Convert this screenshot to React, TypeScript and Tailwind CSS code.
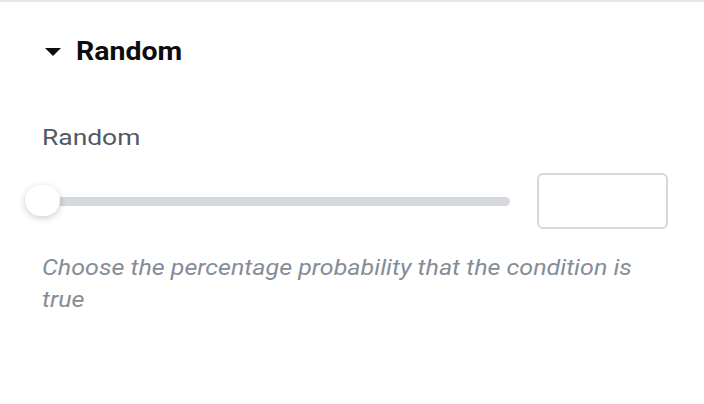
import React from 'react';

export default function App() {
  return (
    <div className="w-[704px] h-[404px] bg-white border-t-2 border-[#e6e8ea] font-['Roboto',sans-serif] overflow-hidden">
      {/* Section header */}
      <div className="flex items-center h-[100px] pl-[45px]">
        <svg width="16" height="8" viewBox="0 0 16 8" className="mr-[15px] shrink-0">
          <path d="M0 0 H16 L8 8 Z" fill="#0c0d0e" />
        </svg>
        <span className="inline-block origin-left scale-x-[1.14] text-[25px] font-bold text-[#0c0d0e]">Random</span>
      </div>

      <div className="pl-[42px]">
        <div className="inline-block origin-left scale-x-[1.2] text-[22px] text-[#515962] leading-none mt-[25px]">Random</div>

        <div className="flex items-center mt-[21px]">
          {/* Slider */}
          <div className="relative w-[468px] h-[40px] flex items-center shrink-0">
            <div className="w-full h-[9px] rounded-full bg-[#d5d8dc]" />
            <div className="absolute left-[-17px] top-[4px] w-[35px] h-[31px] rounded-full bg-white shadow-[0_2px_7px_rgba(0,0,0,0.2)]" />
          </div>
          <div className="ml-[27px] w-[131px] h-[56px] shrink-0 rounded-[6px] border-2 border-[#d5d8dc] bg-white" />
        </div>

        <p className="mt-[23px] w-[520px] origin-left scale-x-[1.165] text-[21.5px] italic leading-[32px] text-[#858d97]">
          Choose the percentage probability that the condition is true
        </p>
      </div>
    </div>
  );
}
